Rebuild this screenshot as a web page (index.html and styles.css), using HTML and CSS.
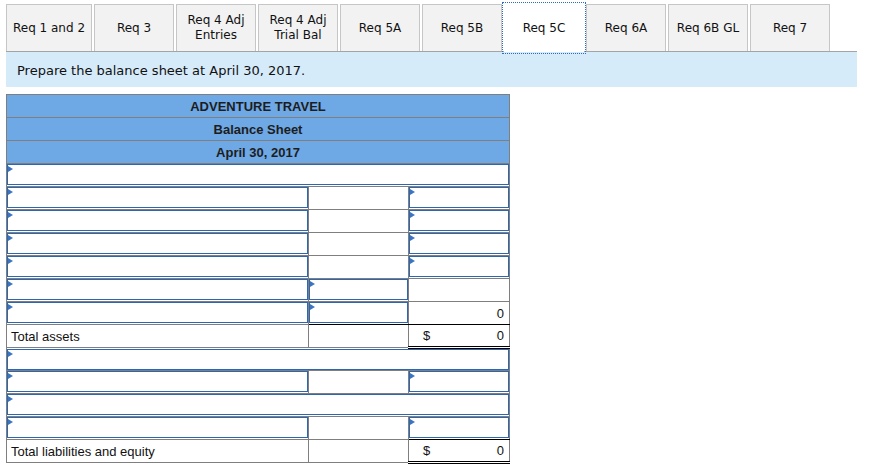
FILE: index.html
```html
<!DOCTYPE html>
<html>
<head>
<meta charset="utf-8">
<link rel="stylesheet" href="styles.css">
</head>
<body>
<div class="page">
  <div class="tabs">
    <div class="tab wide">Req 1 and 2</div>
    <div class="tab">Req 3</div>
    <div class="tab">Req 4 Adj<br>Entries</div>
    <div class="tab">Req 4 Adj<br>Trial Bal</div>
    <div class="tab">Req 5A</div>
    <div class="tab">Req 5B</div>
    <div class="tab active">Req 5C</div>
    <div class="tab">Req 6A</div>
    <div class="tab">Req 6B GL</div>
    <div class="tab">Req 7</div>
  </div>
  <div class="band">Prepare the balance sheet at April 30, 2017.</div>

  <table class="sheet">
    <colgroup><col class="c1"><col class="c2"><col class="c3"></colgroup>
    <tr class="head"><td colspan="3">ADVENTURE TRAVEL</td></tr>
    <tr class="head"><td colspan="3">Balance Sheet</td></tr>
    <tr class="head"><td colspan="3">April 30, 2017</td></tr>

    <tr><td colspan="3" class="in"><div class="box"><span class="tri"></span></div></td></tr>
    <tr><td class="in"><div class="box"><span class="tri"></span></div></td><td></td><td class="in"><div class="box"><span class="tri"></span></div></td></tr>
    <tr><td class="in"><div class="box"><span class="tri"></span></div></td><td></td><td class="in"><div class="box"><span class="tri"></span></div></td></tr>
    <tr><td class="in"><div class="box"><span class="tri"></span></div></td><td></td><td class="in"><div class="box"><span class="tri"></span></div></td></tr>
    <tr><td class="in"><div class="box"><span class="tri"></span></div></td><td></td><td class="in"><div class="box"><span class="tri"></span></div></td></tr>
    <tr><td class="in"><div class="box"><span class="tri"></span></div></td><td class="in"><div class="box"><span class="tri"></span></div></td><td></td></tr>
    <tr><td class="in"><div class="box"><span class="tri"></span></div></td><td class="in under"><div class="box"><span class="tri"></span></div></td><td class="num under">0</td></tr>
    <tr><td class="label">Total assets</td><td></td><td class="num total"><span class="cur">$</span>0</td></tr>

    <tr><td colspan="3" class="in"><div class="box"><span class="tri"></span></div></td></tr>
    <tr><td class="in"><div class="box"><span class="tri"></span></div></td><td></td><td class="in"><div class="box"><span class="tri"></span></div></td></tr>
    <tr><td colspan="3" class="in"><div class="box"><span class="tri"></span></div></td></tr>
    <tr><td class="in"><div class="box"><span class="tri"></span></div></td><td></td><td class="in under"><div class="box"><span class="tri"></span></div></td></tr>
    <tr><td class="label">Total liabilities and equity</td><td></td><td class="num total"><span class="cur">$</span>0</td></tr>
  </table>
</div>
</body>
</html>
```

FILE: styles.css
```css
html, body {
  margin: 0;
  padding: 0;
  background: #ffffff;
}

.page {
  padding: 4px 0 0 6px;
}

.tabs {
  display: flex;
  gap: 2px;
  width: 851px;
  border-bottom: 1px solid #a4a4a4;
  align-items: stretch;
}

.tab {
  box-sizing: border-box;
  width: 80px;
  height: 47px;
  border: 1px solid #c6c6c6;
  border-bottom: none;
  background: #f2f2f2;
  font-family: "DejaVu Sans", Verdana, sans-serif;
  font-size: 12px;
  line-height: 15px;
  color: #111111;
  display: flex;
  align-items: center;
  justify-content: center;
  text-align: center;
}

.tab.wide {
  width: 86px;
}

.tab.active {
  background: #ffffff;
  border-color: #ffffff;
  outline: 1px dotted #2d6bc2;
  outline-offset: 1px;
  height: 48px;
  margin-bottom: -1px;
  padding-bottom: 1px;
  position: relative;
}

.band {
  width: 851px;
  height: 35px;
  box-sizing: border-box;
  background: #d6ebfa;
  font-family: "DejaVu Sans", Verdana, sans-serif;
  font-size: 13px;
  color: #111111;
  padding: 11px 0 0 11px;
}

.sheet {
  margin-top: 7px;
  border-collapse: collapse;
  table-layout: fixed;
  width: 503px;
  font-family: "Liberation Sans", Arial, sans-serif;
  font-size: 13px;
  color: #111111;
}

.c1 { width: 302px; }
.c2 { width: 100px; }
.c3 { width: 101px; }

.sheet td {
  border: 1px solid #7f7f7f;
  height: 22px;
  padding: 0;
  box-sizing: border-box;
}

.sheet tr {
  height: 23px;
}

.sheet tr.head td {
  background: #6ea8e5;
  text-align: center;
  font-weight: bold;
  font-size: 13px;
  color: #1d1d1d;
}

.sheet td.in {
  vertical-align: top;
}

.box {
  position: relative;
  height: 21px;
  box-sizing: border-box;
  border: 1px solid #2f66b0;
  background: #ffffff;
}

.tri {
  position: absolute;
  top: 1px;
  left: 0;
  width: 0;
  height: 0;
  border-left: 5px solid #3a74c2;
  border-top: 3px solid transparent;
  border-bottom: 3px solid transparent;
}

.sheet td.label {
  padding-left: 4px;
}

.sheet td.num {
  text-align: right;
  padding-right: 5px;
}

.sheet td.under {
  border-bottom: 1px solid #000000;
}

.sheet td.total {
  border-bottom: 3px double #000000;
}

.cur {
  float: left;
  padding-left: 14px;
}
```
